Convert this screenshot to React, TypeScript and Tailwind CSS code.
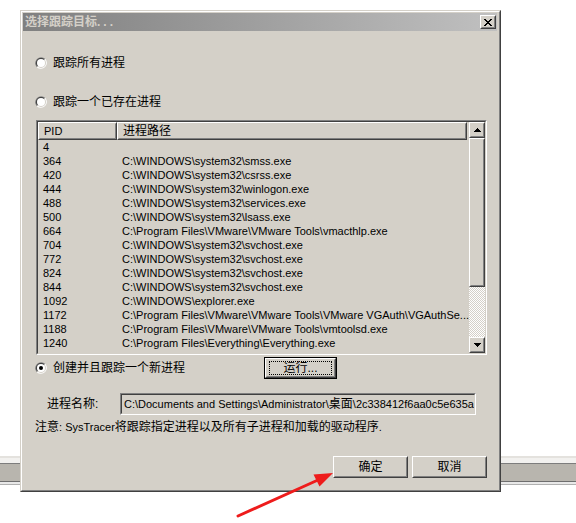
import React from 'react';

const processes: [string, string][] = [
  ['4', ''],
  ['364', 'C:\\WINDOWS\\system32\\smss.exe'],
  ['420', 'C:\\WINDOWS\\system32\\csrss.exe'],
  ['444', 'C:\\WINDOWS\\system32\\winlogon.exe'],
  ['488', 'C:\\WINDOWS\\system32\\services.exe'],
  ['500', 'C:\\WINDOWS\\system32\\lsass.exe'],
  ['664', 'C:\\Program Files\\VMware\\VMware Tools\\vmacthlp.exe'],
  ['704', 'C:\\WINDOWS\\system32\\svchost.exe'],
  ['772', 'C:\\WINDOWS\\system32\\svchost.exe'],
  ['824', 'C:\\WINDOWS\\system32\\svchost.exe'],
  ['844', 'C:\\WINDOWS\\system32\\svchost.exe'],
  ['1092', 'C:\\WINDOWS\\explorer.exe'],
  ['1172', 'C:\\Program Files\\VMware\\VMware Tools\\VMware VGAuth\\VGAuthSe...'],
  ['1188', 'C:\\Program Files\\VMware\\VMware Tools\\vmtoolsd.exe'],
  ['1240', 'C:\\Program Files\\Everything\\Everything.exe'],
  ['1260', 'C:\\WINDOWS\\System32\\alg.exe'],
];

// classic 3D raised box (buttons, header cells, scroll thumb)
const Raised: React.FC<{ className?: string; children?: React.ReactNode }> = ({ className = '', children }) => (
  <div className={`border border-t-white border-l-white border-r-[#404040] border-b-[#404040] bg-[#d4d0c8] ${className}`}>
    <div className="flex h-full w-full items-center justify-center border border-t-[#d4d0c8] border-l-[#d4d0c8] border-r-[#808080] border-b-[#808080]">
      {children}
    </div>
  </div>
);

const Radio: React.FC<{ checked?: boolean }> = ({ checked }) => (
  <svg width="12" height="12" viewBox="0 0 12 12" className="shrink-0">
    <path d="M1.76 10.24A6 6 0 0 1 10.24 1.76Z" fill="#808080" />
    <path d="M10.24 1.76A6 6 0 0 1 1.76 10.24Z" fill="#ffffff" />
    <path d="M2.46 9.54A5 5 0 0 1 9.54 2.46Z" fill="#404040" />
    <path d="M9.54 2.46A5 5 0 0 1 2.46 9.54Z" fill="#d4d0c8" />
    <circle cx="6" cy="6" r="4" fill="#ffffff" />
    {checked && <circle cx="6" cy="6" r="2" fill="#000000" />}
  </svg>
);

const Arrow: React.FC<{ down?: boolean }> = ({ down }) => (
  <svg width="7" height="4" viewBox="0 0 7 4" shapeRendering="crispEdges" className={down ? 'rotate-180' : ''}>
    <rect x="3" y="0" width="1" height="1" fill="#000" />
    <rect x="2" y="1" width="3" height="1" fill="#000" />
    <rect x="1" y="2" width="5" height="1" fill="#000" />
    <rect x="0" y="3" width="7" height="1" fill="#000" />
  </svg>
);

const CloseGlyph = () => (
  <svg width="8" height="7" viewBox="0 0 8 7" shapeRendering="crispEdges">
    {[0, 1, 2, 3, 4, 5, 6].map(i => {
      const a = i <= 3 ? i : 6 - i;
      return (
        <g key={i} fill="#000">
          <rect x={a} y={i} width="2" height="1" />
          <rect x={6 - a} y={i} width="2" height="1" />
        </g>
      );
    })}
  </svg>
);

const Sunken: React.FC<{ className?: string; children?: React.ReactNode }> = ({ className = '', children }) => (
  <div className={`border border-t-[#808080] border-l-[#808080] border-r-white border-b-white ${className}`}>
    <div className="h-full w-full overflow-hidden border border-t-[#404040] border-l-[#404040] border-r-[#d4d0c8] border-b-[#d4d0c8]">
      {children}
    </div>
  </div>
);

export default function App() {
  return (
    <div className="relative h-[523px] w-[576px] overflow-hidden bg-white font-[family-name:Liberation_Sans,Noto_Sans_CJK_SC,sans-serif] text-[11px] text-black">
      {/* window behind the dialog */}
      <div className="absolute left-0 right-0 top-[456px] flex flex-col">
        <div className="h-[2px] bg-[#e4e2de]" />
        <div className="h-[5px] bg-[#f2f1ef]" />
        <div className="h-[1px] bg-[#7d7d7d]" />
        <div className="h-[17px] bg-[#b8b5ae]" />
        <div className="h-[1px] bg-[#6e6e6e]" />
        <div className="h-[2px] bg-[#e8e8e8]" />
        <div className="h-[1px] bg-[#b0b0b0]" />
      </div>

      {/* dialog window */}
      <div className="absolute left-[20px] top-[10px] h-[482px] w-[481px] border border-t-[#d4d0c8] border-l-[#d4d0c8] border-r-[#404040] border-b-[#404040] bg-[#d4d0c8]">
        <div className="flex h-full flex-col border border-t-white border-l-white border-r-[#808080] border-b-[#808080] pt-[1px] pl-[1px] pr-[2px]">
          {/* title bar */}
          <div className="flex h-[18px] shrink-0 items-center justify-between bg-linear-to-r from-[#808080] to-[#c0c0c0] pl-[2px] pr-[1px]">
            <span className="text-[12px] font-bold leading-[18px] text-[#d4d0c8]">
              选择跟踪目标<span className="tracking-[3px]">...</span>
            </span>
            <Raised className="h-[14px] w-[16px]">
              <CloseGlyph />
            </Raised>
          </div>

          <div className="mt-[25px] ml-[12px] flex h-[14px] items-center gap-[6px]">
            <Radio />
            <span className="text-[12px] leading-[14px]">跟踪所有进程</span>
          </div>

          <div className="mt-[25px] ml-[12px] flex h-[14px] items-center gap-[6px]">
            <Radio />
            <span className="text-[12px] leading-[14px]">跟踪一个已存在进程</span>
          </div>

          {/* process list */}
          <Sunken className="mt-[11px] ml-[13px] h-[235px] w-[451px] bg-[#d4d0c8]">
            <div className="flex h-full">
              <div className="flex w-[431px] flex-col overflow-hidden">
                <div className="flex h-[18px] shrink-0">
                  <Raised className="w-[79px] shrink-0">
                    <span className="w-full pl-[4px] leading-[14px]">PID</span>
                  </Raised>
                  <Raised className="w-[350px] shrink-0">
                    <span className="w-full pl-[4px] text-[12px] leading-[14px]">进程路径</span>
                  </Raised>
                </div>
                {processes.map(([pid, path]) => (
                  <div key={pid} className="flex h-[14px] shrink-0 leading-[14px] whitespace-nowrap">
                    <span className="w-[79px] shrink-0 pl-[5px]">{pid}</span>
                    <span className="pl-[5px]">{path}</span>
                  </div>
                ))}
              </div>
              <div className="flex w-[16px] flex-col">
                <Raised className="h-[16px] shrink-0">
                  <Arrow />
                </Raised>
                <Raised className="h-[149px] shrink-0" />
                <div className="h-[50px] shrink-0 bg-[image:repeating-conic-gradient(#ffffff_0_25%,#d4d0c8_0_50%)] bg-[length:2px_2px]" />
                <Raised className="h-[16px] shrink-0">
                  <Arrow down />
                </Raised>
              </div>
            </div>
          </Sunken>

          <div className="mt-[2px] flex h-[22px] items-center">
            <div className="ml-[12px] flex w-[229px] items-center gap-[6px]">
              <Radio checked />
              <span className="text-[12px] leading-[14px]">创建并且跟踪一个新进程</span>
            </div>
            <div className="h-[22px] w-[73px] border border-black">
              <Raised className="h-full w-full">
                <div className="flex h-[14px] w-[63px] items-center justify-center border border-dotted border-black text-[12px] leading-[12px]">
                  运行...
                </div>
              </Raised>
            </div>
          </div>

          <div className="mt-[14px] flex h-[22px] items-center">
            <span className="ml-[24px] w-[73px] text-[12px] leading-[14px]">进程名称:</span>
            <Sunken className="h-[22px] w-[356px] bg-[#d4d0c8]">
              <div className="flex h-full items-center whitespace-nowrap pl-[2px] leading-[14px]">
                C:\Documents and Settings\Administrator\<span className="text-[12px]">桌面</span>\2c338412f6aa0c5e635a7b1d.exe
              </div>
            </Sunken>
          </div>

          <div className="mt-[5px] ml-[12px] h-[14px] text-[12px] leading-[14px] whitespace-nowrap">
            注意<span className="text-[11px]">: SysTracer</span>将跟踪指定进程以及所有子进程和加载的驱动程序<span className="text-[11px]">.</span>
          </div>

          <div className="mt-[22px] flex justify-end gap-[4px] pr-[10px]">
            <Raised className="h-[22px] w-[75px]">
              <span className="text-[12px] leading-[14px]">确定</span>
            </Raised>
            <Raised className="h-[22px] w-[75px]">
              <span className="text-[12px] leading-[14px]">取消</span>
            </Raised>
          </div>
        </div>
      </div>

      {/* red annotation arrow */}
      <svg className="pointer-events-none absolute left-0 top-0" width="576" height="523" viewBox="0 0 576 523">
        <line x1="238" y1="516" x2="318" y2="480" stroke="#ee1c1c" strokeWidth="3" strokeLinecap="round" />
        <polygon points="333,473 319.5,486.5 313.5,474.5" fill="#ee1c1c" />
      </svg>
    </div>
  );
}
